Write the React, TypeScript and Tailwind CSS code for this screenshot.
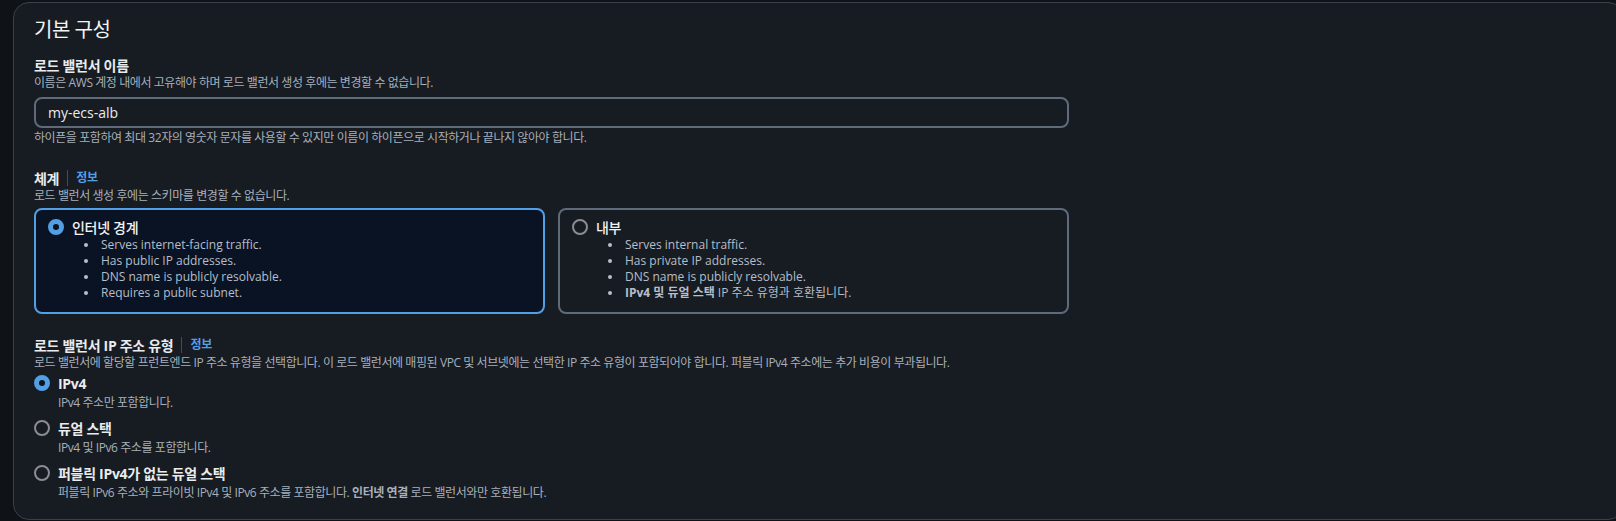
import type { ReactNode } from "react";

const font = { fontFamily: '"Open Sans", "Noto Sans CJK KR", sans-serif' };

function Radio({ checked }: { checked: boolean }) {
  return checked ? (
    <span className="w-4 h-4 shrink-0 rounded-full border-[5px] border-[#539fe5] bg-[#0f141a]" />
  ) : (
    <span className="w-4 h-4 shrink-0 rounded-full border-2 border-[#8c8c94]" />
  );
}

function Label({ children, info }: { children: ReactNode; info?: boolean }) {
  return (
    <div className="flex items-center h-[20px]">
      <span className="text-[14px] font-bold tracking-[-0.3px] text-[#e9ebed]">{children}</span>
      {info && (
        <>
          <span className="mx-[8px] h-[16px] w-px bg-[#414d5c]" />
          <span className="text-[12px] font-bold tracking-[-0.2px] text-[#539fe5]">정보</span>
        </>
      )}
    </div>
  );
}

function Desc({ children }: { children: ReactNode }) {
  return <div className="text-[12px] leading-4 tracking-[-0.42px] text-[#a7b0bb]">{children}</div>;
}

function Tile({ checked, title, items }: { checked: boolean; title: string; items: ReactNode[] }) {
  return (
    <div
      className={
        checked
          ? "rounded-lg border-2 border-[#539fe5] bg-[#0a1324] pl-3 pt-[8px] pb-[11px]"
          : "rounded-lg border-2 border-[#5f6b7a] pl-3 pt-[8px] pb-[11px]"
      }
    >
      <div className="flex items-center gap-2 h-[18px]">
        <Radio checked={checked} />
        <span className="text-[14px] font-medium tracking-[-0.3px] text-[#f2f3f3]">{title}</span>
      </div>
      <ul className="mt-[1px]">
        {items.map((it, i) => (
          <li key={i} className="flex items-center h-[16px] text-[12px] text-[#b6bec9]">
            <span className="ml-[36px] w-[4px] h-[4px] rounded-full bg-[#b6bec9]" />
            <span className="ml-[13px]">{it}</span>
          </li>
        ))}
      </ul>
    </div>
  );
}

function Option({ checked, title, children }: { checked: boolean; title: string; children: ReactNode }) {
  return (
    <div>
      <div className="flex items-center gap-2 h-[18px]">
        <Radio checked={checked} />
        <span className="text-[14px] font-bold tracking-[-0.3px] text-[#e9ebed]">{title}</span>
      </div>
      <div className="pl-6 mt-[3px]">
        <Desc>{children}</Desc>
      </div>
    </div>
  );
}

export default function App() {
  return (
    <div className="min-h-screen w-full overflow-hidden bg-[#0f1216] pt-[2px] pl-[13px]" style={font}>
      <div className="-mr-[8px] h-[518px] rounded-2xl border border-[#3b414b] bg-[#171b22] px-5 pt-[15px]">
        <div className="w-[1035px]">
          <h2 className="text-[20px] leading-6 tracking-[-0.5px] text-[#f2f3f3]">기본 구성</h2>

          <div className="mt-[13px]">
            <Label>로드 밸런서 이름</Label>
            <Desc>이름은 AWS 계정 내에서 고유해야 하며 로드 밸런서 생성 후에는 변경할 수 없습니다.</Desc>
            <div className="mt-[6px] h-[31px] rounded-lg border-2 border-[#5f6b7a] flex items-center px-3 text-[14px] text-[#e9ebed]">
              my-ecs-alb
            </div>
            <div className="mt-[2px]">
              <Desc>하이픈을 포함하여 최대 32자의 영숫자 문자를 사용할 수 있지만 이름이 하이픈으로 시작하거나 끝나지 않아야 합니다.</Desc>
            </div>
          </div>

          <div className="mt-[22px]">
            <Label info>체계</Label>
            <Desc>로드 밸런서 생성 후에는 스키마를 변경할 수 없습니다.</Desc>
            <div className="mt-[4px] grid grid-cols-2 gap-[13px]">
              <Tile
                checked
                title="인터넷 경계"
                items={[
                  "Serves internet-facing traffic.",
                  "Has public IP addresses.",
                  "DNS name is publicly resolvable.",
                  "Requires a public subnet.",
                ]}
              />
              <Tile
                checked={false}
                title="내부"
                items={[
                  "Serves internal traffic.",
                  "Has private IP addresses.",
                  "DNS name is publicly resolvable.",
                  <>
                    <b>IPv4 및 듀얼 스택</b> IP 주소 유형과 호환됩니다.
                  </>,
                ]}
              />
            </div>
          </div>

          <div className="mt-[21px]">
            <Label info>로드 밸런서 IP 주소 유형</Label>
            <div className="w-[1200px]">
              <Desc>
                로드 밸런서에 할당할 프런트엔드 IP 주소 유형을 선택합니다. 이 로드 밸런서에 매핑된 VPC 및 서브넷에는 선택한 IP 주소 유형이 포함되어야 합니다. 퍼블릭 IPv4 주소에는 추가 비용이 부과됩니다.
              </Desc>
            </div>
            <div className="mt-[3px] flex flex-col gap-[8px]">
              <Option checked title="IPv4">IPv4 주소만 포함합니다.</Option>
              <Option checked={false} title="듀얼 스택">IPv4 및 IPv6 주소를 포함합니다.</Option>
              <Option checked={false} title="퍼블릭 IPv4가 없는 듀얼 스택">
                퍼블릭 IPv6 주소와 프라이빗 IPv4 및 IPv6 주소를 포함합니다. <b>인터넷 연결</b> 로드 밸런서와만 호환됩니다.
              </Option>
            </div>
          </div>
        </div>
      </div>
    </div>
  );
}
